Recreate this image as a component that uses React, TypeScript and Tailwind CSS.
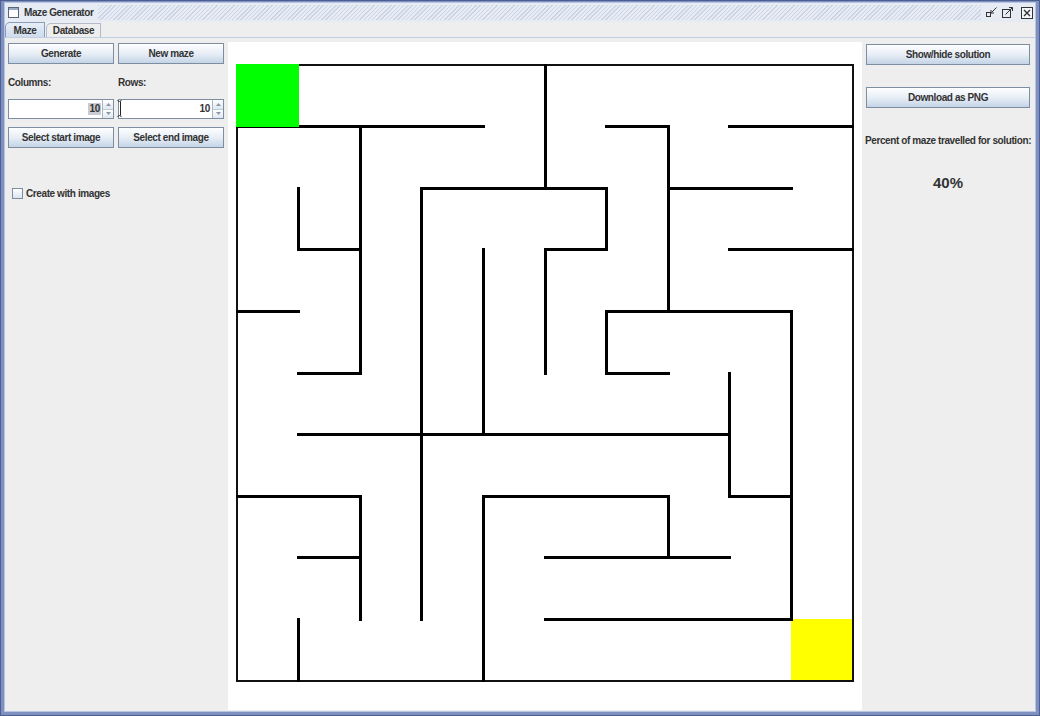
import React from "react";
import clsx from "clsx";

const X = (i: number) => 237 + i * 61.6;
const Y = (j: number) => 64 + j * 61.6;

// horizontal walls: [row, fromCol, toCol]
const hWalls = [
  [1, 0, 4], [1, 6, 7], [1, 8, 10],
  [2, 3, 6], [2, 7, 9],
  [3, 1, 2], [3, 5, 6], [3, 8, 10],
  [4, 0, 1], [4, 6, 9],
  [5, 1, 2], [5, 6, 7],
  [6, 1, 8],
  [7, 0, 2], [7, 4, 7], [7, 8, 9],
  [8, 1, 2], [8, 5, 8],
  [9, 5, 9],
];

// vertical walls: [col, fromRow, toRow]
const vWalls = [
  [1, 2, 3], [1, 9, 10],
  [2, 1, 5], [2, 7, 9],
  [3, 2, 9],
  [4, 3, 6], [4, 7, 10],
  [5, 0, 2], [5, 3, 5],
  [6, 2, 3], [6, 4, 5],
  [7, 1, 4], [7, 7, 8],
  [8, 5, 7],
  [9, 4, 9],
];

const Btn = ({ children, className }: { children: React.ReactNode; className?: string }) => (
  <button
    className={clsx(
      "h-[21px] border border-[#7d8ea3] bg-linear-to-b from-[#fdfeff] via-[#e8eef6] to-[#c4d4e6] text-[10px] font-bold tracking-[-0.4px] text-[#333] flex items-center justify-center",
      className
    )}
  >
    {children}
  </button>
);

const Spinner = ({ selected }: { selected?: boolean }) => (
  <div className="h-[20px] flex border border-[#7d8ea3] bg-white">
    <div className="flex-1 flex items-center justify-end pr-[1px]">
      <span className={clsx("text-[10px] font-bold tracking-[-0.3px] text-[#333] leading-[12px] px-[1px]", selected && "bg-[#c9ccd2]")}>
        10
      </span>
    </div>
    <div className="w-[11px] flex flex-col border-l border-[#aab6c4]">
      <div className="flex-1 flex items-center justify-center bg-linear-to-b from-[#ffffff] to-[#dfe7f0] border-b border-[#c0cad6]">
        <svg width="5" height="3" viewBox="0 0 5 3">
          <path d="M0 3 L2.5 0 L5 3 Z" fill="#8a96a6" />
        </svg>
      </div>
      <div className="flex-1 flex items-center justify-center bg-linear-to-b from-[#ffffff] to-[#dfe7f0]">
        <svg width="5" height="3" viewBox="0 0 5 3">
          <path d="M0 0 L2.5 3 L5 0 Z" fill="#8a96a6" />
        </svg>
      </div>
    </div>
  </div>
);

const Maze = () => (
  <svg width={634} height={669} viewBox="228 41 634 669" className="block" shapeRendering="crispEdges">
    <defs>
      <clipPath id="mazeClip">
        <rect x={236} y={63} width={618} height={618} />
      </clipPath>
    </defs>
    <rect x={X(9)} y={Y(9)} width={61.6} height={61.6} fill="#ffff00" />
    <rect x={237} y={64} width={616} height={616} fill="none" stroke="#111" strokeWidth={2} />
    <g clipPath="url(#mazeClip)">
      {hWalls.map(([j, a, b], k) => (
        <line key={"h" + k} x1={X(a)} y1={Y(j)} x2={X(b)} y2={Y(j)} stroke="#000" strokeWidth={3} strokeLinecap="square" />
      ))}
      {vWalls.map(([i, a, b], k) => (
        <line key={"v" + k} x1={X(i)} y1={Y(a)} x2={X(i)} y2={Y(b)} stroke="#000" strokeWidth={3} strokeLinecap="square" />
      ))}
    </g>
    <rect x={236} y={63} width={62.6} height={62.6} fill="#00ff00" />
  </svg>
);

export default function App() {
  return (
    <div className="w-[1040px] h-[716px] flex flex-col bg-[#7d90c1] border border-[#4d5f8f] pt-[1px] px-[3px] pb-[3px] font-['Liberation_Sans',Arial,sans-serif] text-[#333]">
      <div className="flex-1 flex flex-col border border-[#b7c4e2] bg-[#eeeeee] min-h-0">
        {/* title bar */}
        <div className="h-[19px] flex items-center bg-[#e6ebf4]">
          <svg width="11" height="11" viewBox="0 0 11 11" className="ml-[3px]">
            <rect x="0.5" y="0.5" width="10" height="10" fill="#fff" stroke="#5a6678" />
            <rect x="1" y="1" width="9" height="2" fill="#9aabc8" />
          </svg>
          <span className="ml-[5px] text-[10px] font-bold tracking-[-0.4px] text-[#333]">Maze Generator</span>
          <div className="flex-1 h-[15px] mx-[5px] bg-[repeating-linear-gradient(135deg,#cbd4e5_0px,#cbd4e5_1px,#e6ebf4_1px,#e6ebf4_3px)]" />
          <div className="flex items-center gap-[5px] pr-[2px]">
            <svg width="11" height="11" viewBox="0 0 11 11">
              <rect x="0.5" y="5.5" width="4" height="4" fill="none" stroke="#333" />
              <path d="M10.5 0.5 L5.5 5.5" stroke="#333" />
              <path d="M5 3 L5 6 L8 6" fill="none" stroke="#333" />
            </svg>
            <svg width="11" height="11" viewBox="0 0 11 11">
              <rect x="0.5" y="2.5" width="8" height="8" fill="none" stroke="#333" />
              <path d="M3.5 7.5 L10.5 0.5" stroke="#333" />
              <path d="M7 0.5 L10.5 0.5 L10.5 4" fill="none" stroke="#333" />
            </svg>
            <svg width="12" height="12" viewBox="0 0 12 12" className="ml-[3px]">
              <rect x="0.5" y="0.5" width="11" height="11" fill="#f4f6fa" stroke="#333" />
              <path d="M3 3 L9 9 M9 3 L3 9" stroke="#333" strokeWidth="1.4" />
            </svg>
          </div>
        </div>

        {/* tabs */}
        <div className="h-[16px] flex items-end border-b border-[#c2cfe2]">
          <div className="h-[15px] w-[40px] flex items-center justify-center rounded-tl-[5px] border border-b-0 border-[#8a9cb8] bg-linear-to-b from-[#e6eef8] to-[#cfdcec] text-[10px] font-bold tracking-[-0.4px]">
            Maze
          </div>
          <div className="h-[14px] w-[55px] ml-[1px] flex items-center justify-center rounded-tl-[5px] border border-b-0 border-[#b0bccd] bg-[#eeeeee] text-[10px] font-bold tracking-[-0.4px]">
            Database
          </div>
        </div>

        {/* content */}
        <div className="flex-1 flex min-h-0">
          <div className="w-[223px] pl-[3px] pr-[4px] pt-[5px]">
            <div className="grid grid-cols-2 gap-x-[4px]">
              <Btn>Generate</Btn>
              <Btn>New maze</Btn>
              <div className="mt-[11px] h-[14px] flex items-center text-[10px] font-bold tracking-[-0.4px]">Columns:</div>
              <div className="mt-[11px] h-[14px] flex items-center text-[10px] font-bold tracking-[-0.4px]">Rows:</div>
              <div className="mt-[10px]">
                <Spinner selected />
              </div>
              <div className="mt-[10px] relative">
                <Spinner />
                <svg width="7" height="17" viewBox="0 0 7 17" className="absolute -left-[1px] top-[1px]">
                  <path d="M0.5 0.5 L2.5 1.5 L4.5 0.5 M3.5 1.5 L3.5 15.5 M0.5 16.5 L2.5 15.5 L4.5 16.5" fill="none" stroke="#222" strokeWidth="1" />
                </svg>
              </div>
              <Btn className="mt-[8px]">Select start image</Btn>
              <Btn className="mt-[8px]">Select end image</Btn>
            </div>
            <div className="mt-[38px] flex items-center gap-[3px] pl-[4px]">
              <div className="w-[11px] h-[11px] border border-[#7d8ea3] bg-linear-to-b from-[#ffffff] to-[#dbe4ef]" />
              <span className="text-[10px] font-bold tracking-[-0.4px]">Create with images</span>
            </div>
          </div>

          <div className="pt-[4px] pb-[1px] flex flex-col">
            <div className="flex-1 bg-white overflow-hidden">
              <Maze />
            </div>
          </div>

          <div className="w-[173px] pl-[4px] pr-[5px] pt-[6px] flex flex-col">
            <Btn>Show/hide solution</Btn>
            <Btn className="mt-[22px]">Download as PNG</Btn>
            <div className="mt-[26px] h-[12px] flex items-center justify-center text-[10px] font-bold tracking-[-0.4px] whitespace-nowrap">
              Percent of maze travelled for solution:
            </div>
            <div className="mt-[28px] h-[18px] flex items-center justify-center text-[15px] font-bold">40%</div>
          </div>
        </div>
      </div>
    </div>
  );
}
